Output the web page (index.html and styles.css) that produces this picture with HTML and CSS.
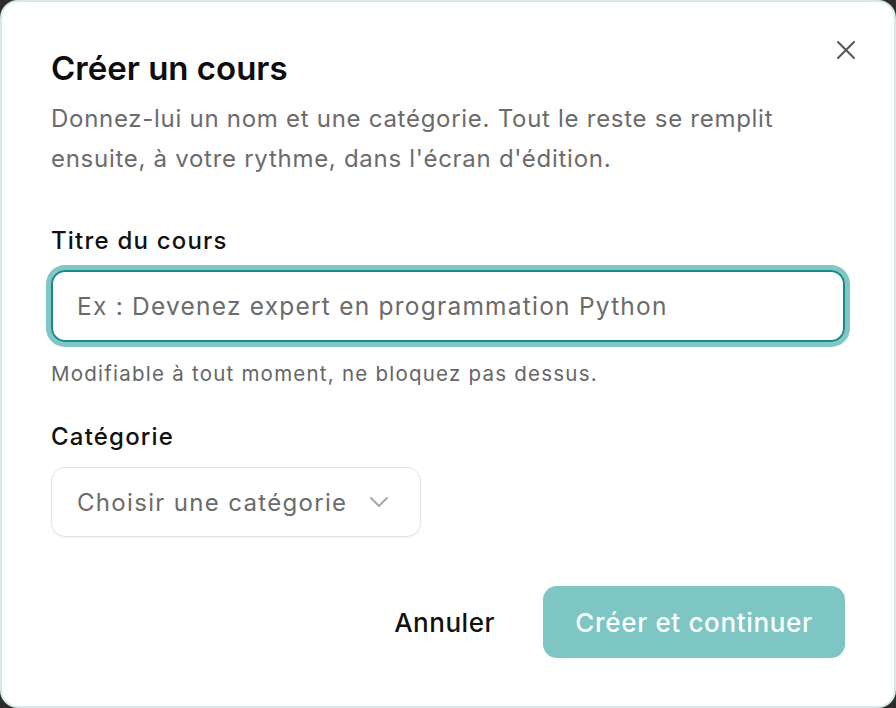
FILE: index.html
```html
<!DOCTYPE html>
<html lang="fr">
<head>
<meta charset="utf-8">
<link rel="stylesheet" href="styles.css">
</head>
<body>
<div class="dialog">
  <button class="close" aria-label="Fermer">
    <svg width="20" height="20" viewBox="0 0 20 20"><path d="M2 2 L18 18 M18 2 L2 18" stroke="#555" stroke-width="2" stroke-linecap="round" fill="none"/></svg>
  </button>
  <h1 class="title">Créer un cours</h1>
  <p class="desc">Donnez-lui un nom et une catégorie. Tout le reste se remplit ensuite, à votre rythme, dans l'écran d'édition.</p>
  <label class="label label-title">Titre du cours</label>
  <div class="input">Ex : Devenez expert en programmation Python</div>
  <p class="help">Modifiable à tout moment, ne bloquez pas dessus.</p>
  <label class="label label-cat">Catégorie</label>
  <div class="select">
    <span>Choisir une catégorie</span>
    <svg width="18" height="10" viewBox="0 0 18 10"><path d="M1 1 L9 9 L17 1" stroke="#a3a3a3" stroke-width="1.8" fill="none" stroke-linecap="round" stroke-linejoin="round"/></svg>
  </div>
  <div class="actions">
    <button class="cancel">Annuler</button>
    <button class="primary">Créer et continuer</button>
  </div>
</div>
</body>
</html>
```
FILE: styles.css
```css
html, body {
  margin: 0;
  padding: 0;
  background: #2b2b2b;
}
body {
  font-family: Inter, "Noto Sans", sans-serif;
  color: #111;
}
.dialog {
  position: relative;
  box-sizing: border-box;
  width: 896px;
  height: 708px;
  background: #fff;
  border: 2px solid #d9e8e5;
  border-radius: 18px;
  padding: 46px 49px 48px 49px;
  display: flex;
  flex-direction: column;
}
.close {
  position: absolute;
  top: 36px;
  right: 36px;
  width: 24px;
  height: 24px;
  padding: 2px;
  border: 0;
  background: none;
  display: flex;
  align-items: center;
  justify-content: center;
}
.title {
  margin: 0;
  font-size: 33px;
  line-height: 40px;
  font-weight: 600;
  letter-spacing: 0;
  color: #0d0d0d;
}
.desc {
  margin: 11px 0 0;
  font-size: 24px;
  line-height: 40px;
  color: #6b6b6b;
  letter-spacing: 0.03em;
}
.label {
  display: block;
  font-size: 24px;
  line-height: 32px;
  font-weight: 500;
  letter-spacing: 0.05em;
  color: #111;
}
.label-title { margin-top: 46px; }
.label-cat { margin-top: 33px; }
.input {
  margin-top: 13px;
  box-sizing: border-box;
  height: 72px;
  border: 2px solid #16898a;
  border-radius: 14px;
  box-shadow: 0 0 0 5px #80c7c4;
  padding: 0 24px;
  display: flex;
  align-items: center;
  font-size: 24.5px;
  letter-spacing: 0.05em;
  color: #6b6b6b;
}
.help {
  margin: 18px 0 0;
  font-size: 20.5px;
  line-height: 28px;
  letter-spacing: 0.06em;
  color: #666;
}
.select {
  margin-top: 14px;
  box-sizing: border-box;
  width: 370px;
  height: 70px;
  border: 1.5px solid #dbe7e4;
  border-radius: 14px;
  box-shadow: 0 1px 2px rgba(0,0,0,0.05);
  padding: 0 32px 0 25px;
  display: flex;
  align-items: center;
  justify-content: space-between;
  font-size: 24px;
  letter-spacing: 0.055em;
  color: #6b6b6b;
}
.actions {
  margin-top: auto;
  display: flex;
  justify-content: flex-end;
  align-items: center;
  gap: 48px;
}
.cancel {
  border: 0;
  background: none;
  padding: 0;
  font-family: inherit;
  font-size: 26px;
  font-weight: 500;
  letter-spacing: 0.02em;
  color: #111;
}
.primary {
  width: 302px;
  height: 72px;
  border: 0;
  border-radius: 14px;
  background: #7dc6c3;
  color: #fff;
  font-family: inherit;
  font-size: 26px;
  font-weight: 500;
  letter-spacing: 0.025em;
}
```
